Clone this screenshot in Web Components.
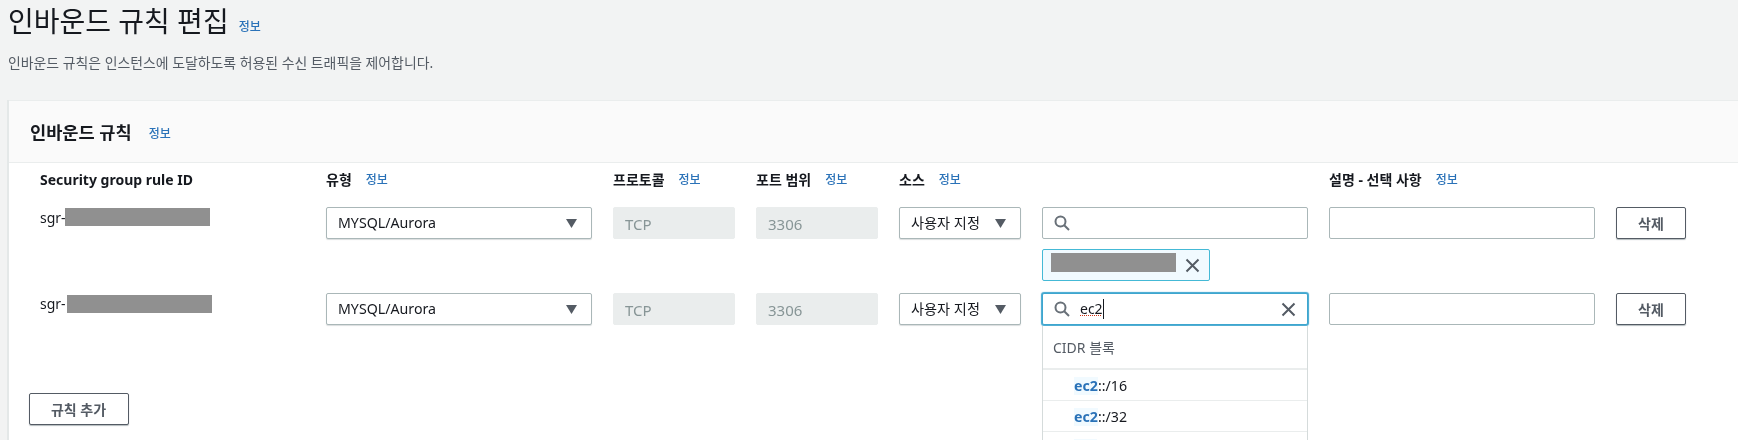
<!DOCTYPE html>
<html lang="ko">
<head>
<meta charset="utf-8">
<title>인바운드 규칙 편집</title>
<style>
    html, body {
        margin: 0;
        height: 440px;
        overflow: hidden;
        background: #f2f3f3;
        color: #16191f;
        font-family: "Noto Sans", "Noto Sans CJK KR", sans-serif;
        font-size: 14px;
    }
    /* the reference is a slightly soft, rescaled capture */
    body { filter: blur(0.35px); }
</style>
</head>
<body>
<page-head>
    <span slot="title">인바운드 규칙 편집</span>
    인바운드 규칙은 인스턴스에 도달하도록 허용된 수신 트래픽을 제어합니다.
</page-head>

<rules-panel>
    <span slot="title">인바운드 규칙</span>

    <rule-head>
        <col-label>Security group rule ID</col-label>
        <col-label info>유형</col-label>
        <col-label info>프로토콜</col-label>
        <col-label info>포트 범위</col-label>
        <col-label info>소스</col-label>
        <span></span>
        <col-label info>설명 - 선택 사항</col-label>
    </rule-head>

    <rule-row>
        <sgr-id mask="145" shift="0" drop="1"></sgr-id>
        <select-box>MYSQL/Aurora</select-box>
        <text-box disabled>TCP</text-box>
        <text-box disabled>3306</text-box>
        <select-box>사용자 지정</select-box>
        <source-cell>
            <search-box></search-box>
            <token-chip></token-chip>
        </source-cell>
        <text-box></text-box>
        <push-button>삭제</push-button>
    </rule-row>

    <rule-row>
        <sgr-id mask="145" shift="2" drop="2"></sgr-id>
        <select-box>MYSQL/Aurora</select-box>
        <text-box disabled>TCP</text-box>
        <text-box disabled>3306</text-box>
        <select-box>사용자 지정</select-box>
        <source-cell>
            <search-box value="ec2">
                <suggest-group label="CIDR 블록">
                    <suggest-item rest="::/16">ec2</suggest-item>
                    <suggest-item rest="::/32">ec2</suggest-item>
                    <suggest-item></suggest-item>
                </suggest-group>
            </search-box>
        </source-cell>
        <text-box></text-box>
        <push-button>삭제</push-button>
    </rule-row>

    <push-button slot="footer">규칙 추가</push-button>
</rules-panel>

<script>
const SEARCH_ICON = `<svg width="16" height="16" viewBox="0 0 16 16" fill="none" stroke="#687078" stroke-width="2"><circle cx="6.5" cy="6.5" r="5"/><path d="M10.2 10.2 15 15"/></svg>`;
const CLOSE_ICON = `<svg width="15" height="15" viewBox="0 0 15 15" fill="none" stroke="#545b64" stroke-width="2"><path d="M1.5 1.5l12 12M13.5 1.5l-12 12"/></svg>`;

class Base extends HTMLElement {
    render(html) {
        if (!this.shadowRoot) this.attachShadow({ mode: 'open' });
        this.shadowRoot.innerHTML = html;
    }
}

class InfoLink extends Base {
    connectedCallback() {
        this.render(`
            <style>
                :host {
                    display: inline-block;
                    color: #2a72b8;
                    font-size: 12px;
                    font-weight: 500;
                    line-height: 16px;
                    position: relative;
                    top: 1px;
                }
            </style>
            <slot>정보</slot>`);
    }
}

class PageHead extends Base {
    connectedCallback() {
        this.render(`
            <style>
                :host { display: block; padding-left: 8px; }
                .title { display: flex; align-items: baseline; gap: 10px; height: 42px; line-height: 42px; }
                .title slot { font-size: 28px; font-weight: 400; }
                .title info-link { top: -1px; }
                p { margin: 11px 0 0; line-height: 20px; color: #545b64; font-size: 13.9px; }
            </style>
            <div class="title"><slot name="title"></slot><info-link></info-link></div>
            <p><slot></slot></p>`);
    }
}

class RulesPanel extends Base {
    connectedCallback() {
        this.render(`
            <style>
                :host {
                    display: block;
                    margin: 27px 0 0 7px;
                    height: 345px;
                    background: #fff;
                    border-left: 2px solid #e4e8e8;
                    --cols: 265px 266px 122px 122px 122px 266px 266px 70px;
                }
                header {
                    display: flex;
                    align-items: center;
                    gap: 17px;
                    box-sizing: border-box;
                    height: 63px;
                    padding-left: 21px;
                    background: #fafafa;
                    border-top: 1px solid #eaeded;
                    border-bottom: 1px solid #eaeded;
                }
                header slot { font-size: 17.6px; font-weight: 700; }
                header info-link { top: 2px; }
                .body { padding-left: 31px; }
                .footer { margin: 68px 0 0 19.5px; }
            </style>
            <header><slot name="title"></slot><info-link></info-link></header>
            <div class="body"><slot></slot></div>
            <div class="footer"><slot name="footer"></slot></div>`);
    }
}

class RuleHead extends Base {
    connectedCallback() {
        this.render(`
            <style>
                :host {
                    display: grid;
                    grid-template-columns: var(--cols);
                    column-gap: 21px;
                    height: 44px;
                    padding-top: 6px;
                    box-sizing: border-box;
                }
            </style>
            <slot></slot>`);
    }
}

class ColLabel extends Base {
    connectedCallback() {
        const info = this.hasAttribute('info') ? '<info-link></info-link>' : '';
        this.render(`
            <style>
                :host { display: flex; align-items: center; gap: 14px; height: 20px; white-space: nowrap; }
                slot { font-weight: 700; font-size: 14px; color: #16191f; }
            </style>
            <slot></slot>${info}`);
    }
}

class RuleRow extends Base {
    connectedCallback() {
        this.render(`
            <style>
                :host {
                    display: grid;
                    grid-template-columns: var(--cols);
                    column-gap: 21px;
                    align-items: start;
                    margin-bottom: 12px;
                }
            </style>
            <slot></slot>`);
    }
}

class SgrId extends Base {
    connectedCallback() {
        const w = this.getAttribute('mask');
        const shift = this.getAttribute('shift');
        const drop = this.getAttribute('drop');
        this.render(`
            <style>
                :host { display: flex; align-items: flex-start; padding-top: 1px; line-height: 20px; color: #16191f; }
                .id { width: 25px; overflow: hidden; }
                .mask { height: 18px; width: ${w}px; margin-left: ${shift}px; margin-top: ${drop - 1}px; background: #909090; }
            </style>
            <span class="id">sgr-</span><span class="mask"></span>`);
    }
}

class SelectBox extends Base {
    connectedCallback() {
        this.render(`
            <style>
                :host {
                    display: flex;
                    align-items: center;
                    justify-content: space-between;
                    box-sizing: border-box;
                    height: 32px;
                    padding: 0 14px 0 11px;
                    border: 1px solid #aab7b8;
                    border-radius: 2px;
                    background: #fff;
                    line-height: 20px;
                    font-size: 14.2px;
                    white-space: nowrap;
                    box-shadow: 0 1px 1px rgba(0, 28, 36, 0.15);
                }
                svg { flex: none; }
            </style>
            <slot></slot>
            <svg width="11" height="9" viewBox="0 0 11 9"><path d="M0 0h11L5.5 9z" fill="#545b64"/></svg>`);
    }
}

class TextBox extends Base {
    connectedCallback() {
        const off = this.hasAttribute('disabled');
        this.render(`
            <style>
                :host {
                    display: flex;
                    align-items: center;
                    box-sizing: border-box;
                    height: 32px;
                    padding: 2px 11px 0;
                    border: 1px solid ${off ? '#eaeded' : '#aab7b8'};
                    border-radius: 2px;
                    background: ${off ? '#eaeded' : '#fff'};
                    color: #879596;
                    line-height: 20px;
                    font-size: 15px;
                }
            </style>
            <slot></slot>`);
    }
}

class SourceCell extends Base {
    connectedCallback() {
        this.render(`
            <style>
                :host { display: flex; flex-direction: column; gap: 10px; align-items: flex-start; }
            </style>
            <slot></slot>`);
    }
}

class SearchBox extends Base {
    connectedCallback() {
        const value = this.getAttribute('value');
        this.render(`
            <style>
                :host { display: block; position: relative; width: 100%; }
                .box {
                    display: flex;
                    align-items: center;
                    box-sizing: border-box;
                    height: 32px;
                    padding: 0 11px 0 11px;
                    background: #fff;
                    border: 1px solid ${value ? '#3ea6cf' : '#aab7b8'};
                    border-radius: 2px;
                    ${value ? 'box-shadow: 0 0 1px 1px #3ea6cf;' : ''}
                }
                .val { margin-left: 10px; line-height: 20px; border-right: 1px solid #16191f; text-decoration: underline dotted #d13212 1px; }
                .clear { margin-left: auto; display: flex; }
                .pop { position: absolute; top: 33px; left: 0; right: 0; height: 114px; overflow: hidden; }
            </style>
            <div class="box">
                ${SEARCH_ICON}
                ${value ? `<span class="val">${value}</span><span class="clear">${CLOSE_ICON}</span>` : ''}
            </div>
            <div class="pop"><slot></slot></div>`);
    }
}

class TokenChip extends Base {
    connectedCallback() {
        this.render(`
            <style>
                :host {
                    display: flex;
                    align-items: flex-start;
                    box-sizing: border-box;
                    width: 168px;
                    height: 32px;
                    padding: 3px 9px 0 8px;
                    background: #f1faff;
                    border: 1px solid #44b9d6;
                    border-radius: 2px;
                }
                .mask { width: 125px; height: 19px; background: #909090; }
                svg { margin: 5px 0 0 auto; }
            </style>
            <span class="mask"></span>${CLOSE_ICON}`);
    }
}

class SuggestGroup extends Base {
    connectedCallback() {
        this.render(`
            <style>
                :host {
                    display: block;
                    background: #fff;
                    border: 1px solid #d5dbdb;
                    border-top: 0;
                    box-shadow: 0 1px 2px rgba(0, 28, 36, 0.2);
                }
                .label {
                    box-sizing: border-box;
                    height: 44px;
                    padding: 12px 10px 0;
                    line-height: 20px;
                    color: #545b64;
                    border-bottom: 2px solid #eaeded;
                }
            </style>
            <div class="label">${this.getAttribute('label')}</div>
            <slot></slot>`);
    }
}

class SuggestItem extends Base {
    connectedCallback() {
        // the last row is cut by the frame, only the top of its highlight shows
        const rest = this.getAttribute('rest');
        this.render(`
            <style>
                :host {
                    display: flex;
                    align-items: center;
                    box-sizing: border-box;
                    height: 31px;
                    padding: 2px 0 0 31px;
                    border-bottom: 1px solid #eaeded;
                    line-height: 18px;
                    color: #16191f;
                    font-size: 14.2px;
                }
                mark { display: block; min-width: 23px; min-height: 18px; background: #f1faff; color: #2a72b8; font-weight: 700; }
            </style>
            <mark><slot></slot></mark><span>${rest || ''}</span>`);
    }
}

class PushButton extends Base {
    connectedCallback() {
        const wide = this.getAttribute('slot') === 'footer';
        this.render(`
            <style>
                :host {
                    display: flex;
                    align-items: center;
                    justify-content: center;
                    box-sizing: border-box;
                    width: ${wide ? '100px' : '70px'};
                    height: 32px;
                    border: 1px solid #545b64;
                    border-radius: 2px;
                    background: #fff;
                    color: #545b64;
                    font-weight: 700;
                    font-size: 14px;
                    box-shadow: 0 1px 1px rgba(0, 28, 36, 0.3);
                }
            </style>
            <slot></slot>`);
    }
}

customElements.define('info-link', InfoLink);
customElements.define('page-head', PageHead);
customElements.define('rules-panel', RulesPanel);
customElements.define('rule-head', RuleHead);
customElements.define('col-label', ColLabel);
customElements.define('rule-row', RuleRow);
customElements.define('sgr-id', SgrId);
customElements.define('select-box', SelectBox);
customElements.define('text-box', TextBox);
customElements.define('source-cell', SourceCell);
customElements.define('search-box', SearchBox);
customElements.define('token-chip', TokenChip);
customElements.define('suggest-group', SuggestGroup);
customElements.define('suggest-item', SuggestItem);
customElements.define('push-button', PushButton);
</script>
</body>
</html>
